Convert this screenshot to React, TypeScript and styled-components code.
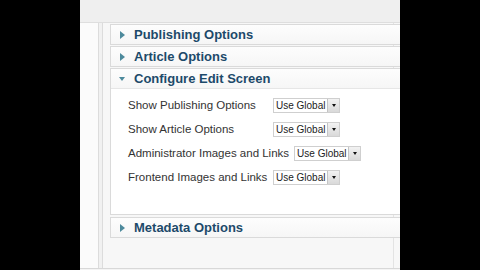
import React from "react";
import styled, { createGlobalStyle } from "styled-components";

const Global = createGlobalStyle`
  html, body {
    margin: 0;
    padding: 0;
    background: #000;
  }
  body {
    font-family: "Liberation Sans", Arial, sans-serif;
  }
`;

const Screen = styled.div`
  width: 480px;
  height: 270px;
  display: flex;
  overflow: hidden;
  background: #000;
`;

const Letterbox = styled.div`
  width: 80px;
  flex: none;
  background: #000;
`;

const Window = styled.div`
  width: 320px;
  flex: none;
  display: flex;
  flex-direction: column;
  background: #f7f7f7;
`;

const TopBar = styled.div`
  height: 22px;
  flex: none;
  background: #efefef;
  border-bottom: 1px solid #dedede;
`;

const Body = styled.div`
  flex: 1;
  display: flex;
  border-bottom: 1px solid #d8d8d8;
`;

const LeftRail = styled.div`
  width: 18px;
  flex: none;
  background: #fbfbfb;
  border-right: 1px solid #dcdcdc;
`;

const Gutter = styled.div`
  width: 3px;
  flex: none;
  background: #f1f1f1;
  border-right: 1px solid #dcdcdc;
`;

const Main = styled.div`
  flex: 1;
  min-width: 0;
  padding: 1px 0 0 7px;
  background: linear-gradient(
    to right,
    transparent 290px,
    #e3e3e3 290px,
    #e3e3e3 291px,
    transparent 291px
  );
`;

const Footer = styled.div`
  height: 1px;
  flex: none;
  background: #f4f4f4;
`;

const Panel = styled.div<{ $gap?: number }>`
  border: 1px solid #dadada;
  border-right: none;
  margin-bottom: ${(p) => p.$gap ?? 1}px;
  background: #fff;
`;

const Header = styled.div`
  height: 19px;
  display: flex;
  align-items: center;
  gap: 9px;
  padding-left: 8px;
  background: linear-gradient(#fdfdfd, #f6f6f6);
  color: #1d4a6a;
  font-size: 13px;
  font-weight: bold;
`;

const Toggle = styled.svg`
  width: 6px;
  height: 8px;
  flex: none;
  fill: #4d8a9c;
`;

const Fields = styled.div`
  height: 126px;
  border-top: 1px solid #e6e6e6;
  padding: 4px 0 0 17px;
  box-sizing: border-box;
`;

const Row = styled.div`
  height: 24px;
  display: flex;
  align-items: center;
`;

const Label = styled.span`
  min-width: 140px;
  margin-right: 5px;
  font-size: 11.5px;
  color: #333;
  white-space: nowrap;
`;

const Select = styled.div`
  height: 15px;
  width: 67px;
  flex: none;
  display: flex;
  border: 1px solid #cfcfcf;
  box-sizing: border-box;
  background: #fff;
`;

const SelectText = styled.span`
  flex: 1;
  padding-left: 2px;
  font-size: 10px;
  line-height: 13px;
  color: #222;
  white-space: nowrap;
`;

const SelectButton = styled.span`
  width: 11px;
  flex: none;
  display: flex;
  align-items: center;
  justify-content: center;
  background: linear-gradient(#f2f2f2, #d9d9d9);
  border-left: 1px solid #c4c4c4;

  &::after {
    content: "";
    border-left: 2.5px solid transparent;
    border-right: 2.5px solid transparent;
    border-top: 3px solid #111;
  }
`;

const Arrow = ({ open }: { open?: boolean }) =>
  open ? (
    <Toggle viewBox="0 0 6 8">
      <polygon points="0,2 6,2 3,6" />
    </Toggle>
  ) : (
    <Toggle viewBox="0 0 6 8">
      <polygon points="1,0 6,4 1,8" />
    </Toggle>
  );

const fields = [
  "Show Publishing Options",
  "Show Article Options",
  "Administrator Images and Links",
  "Frontend Images and Links",
];

export default function App() {
  return (
    <Screen>
      <Global />
      <Letterbox />
      <Window>
        <TopBar />
        <Body>
          <LeftRail />
          <Gutter />
          <Main>
            <Panel>
              <Header>
                <Arrow />
                Publishing Options
              </Header>
            </Panel>
            <Panel>
              <Header>
                <Arrow />
                Article Options
              </Header>
            </Panel>
            <Panel $gap={2}>
              <Header>
                <Arrow open />
                Configure Edit Screen
              </Header>
              <Fields>
                {fields.map((f) => (
                  <Row key={f}>
                    <Label>{f}</Label>
                    <Select>
                      <SelectText>Use Global</SelectText>
                      <SelectButton />
                    </Select>
                  </Row>
                ))}
              </Fields>
            </Panel>
            <Panel>
              <Header>
                <Arrow />
                Metadata Options
              </Header>
            </Panel>
          </Main>
        </Body>
        <Footer />
      </Window>
      <Letterbox />
    </Screen>
  );
}
